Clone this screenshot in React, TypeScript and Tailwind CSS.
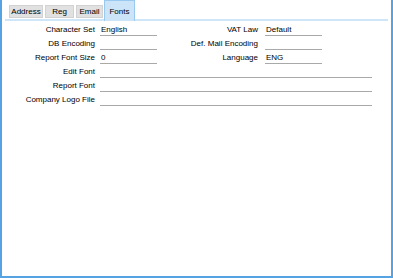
const tabs = [
  { label: 'Address', w: 'w-[34px]' },
  { label: 'Reg', w: 'w-[29px]' },
  { label: 'Email', w: 'w-[27px]' },
];

function Field({ label, value, wide }: { label: string; value?: string; wide?: boolean }) {
  return (
    <div className="flex h-[14px] items-end">
      <div className="w-[98px] shrink-0 pr-[5px] text-right leading-[12px]">{label}</div>
      <div
        className={
          (wide ? 'w-[272px]' : 'w-[57px]') +
          ' h-[12px] border-b border-[#a9a9a9] pl-[1px] leading-[11px]'
        }
      >
        {value}
      </div>
    </div>
  );
}

function RightField({ label, value }: { label: string; value?: string }) {
  return (
    <div className="flex h-[14px] items-end">
      <div className="w-[108px] shrink-0 pr-[7px] text-right leading-[12px]">{label}</div>
      <div className="h-[12px] w-[57px] border-b border-[#a9a9a9] pl-[1px] leading-[11px]">{value}</div>
    </div>
  );
}

export default function App() {
  return (
    <div
      className="h-[278px] w-[393px] border-x-2 border-b-2 border-[#55a3e3] bg-white text-[8px] text-black"
      style={{ fontFamily: '"Liberation Sans", Arial, sans-serif' }}
    >
      <div className="mx-[3px] flex h-[21px] items-end border-b-2 border-[#cfe6f8] pl-[4px]">
        {tabs.map((t) => (
          <div
            key={t.label}
            className={
              t.w +
              ' mb-[1px] mr-[2px] flex h-[13px] items-center justify-center border border-[#d2d2d2] bg-[#e1e1e1]'
            }
          >
            {t.label}
          </div>
        ))}
        <div className="-mb-[2px] -ml-[1px] flex h-[21px] w-[31px] items-center justify-center border border-b-0 border-[#99c9ef] bg-[#cce4f7] pt-[1px]">
          Fonts
        </div>
      </div>

      <div className="pt-[1px]">
        <div className="flex">
          <div>
            <Field label="Character Set" value="English" />
            <Field label="DB Encoding" />
            <Field label="Report Font Size" value="0" />
          </div>
          <div>
            <RightField label="VAT Law" value="Default" />
            <RightField label="Def. Mail Encoding" />
            <RightField label="Language" value="ENG" />
          </div>
        </div>
        <Field label="Edit Font" wide />
        <Field label="Report Font" wide />
        <Field label="Company Logo File" wide />
      </div>
    </div>
  );
}
